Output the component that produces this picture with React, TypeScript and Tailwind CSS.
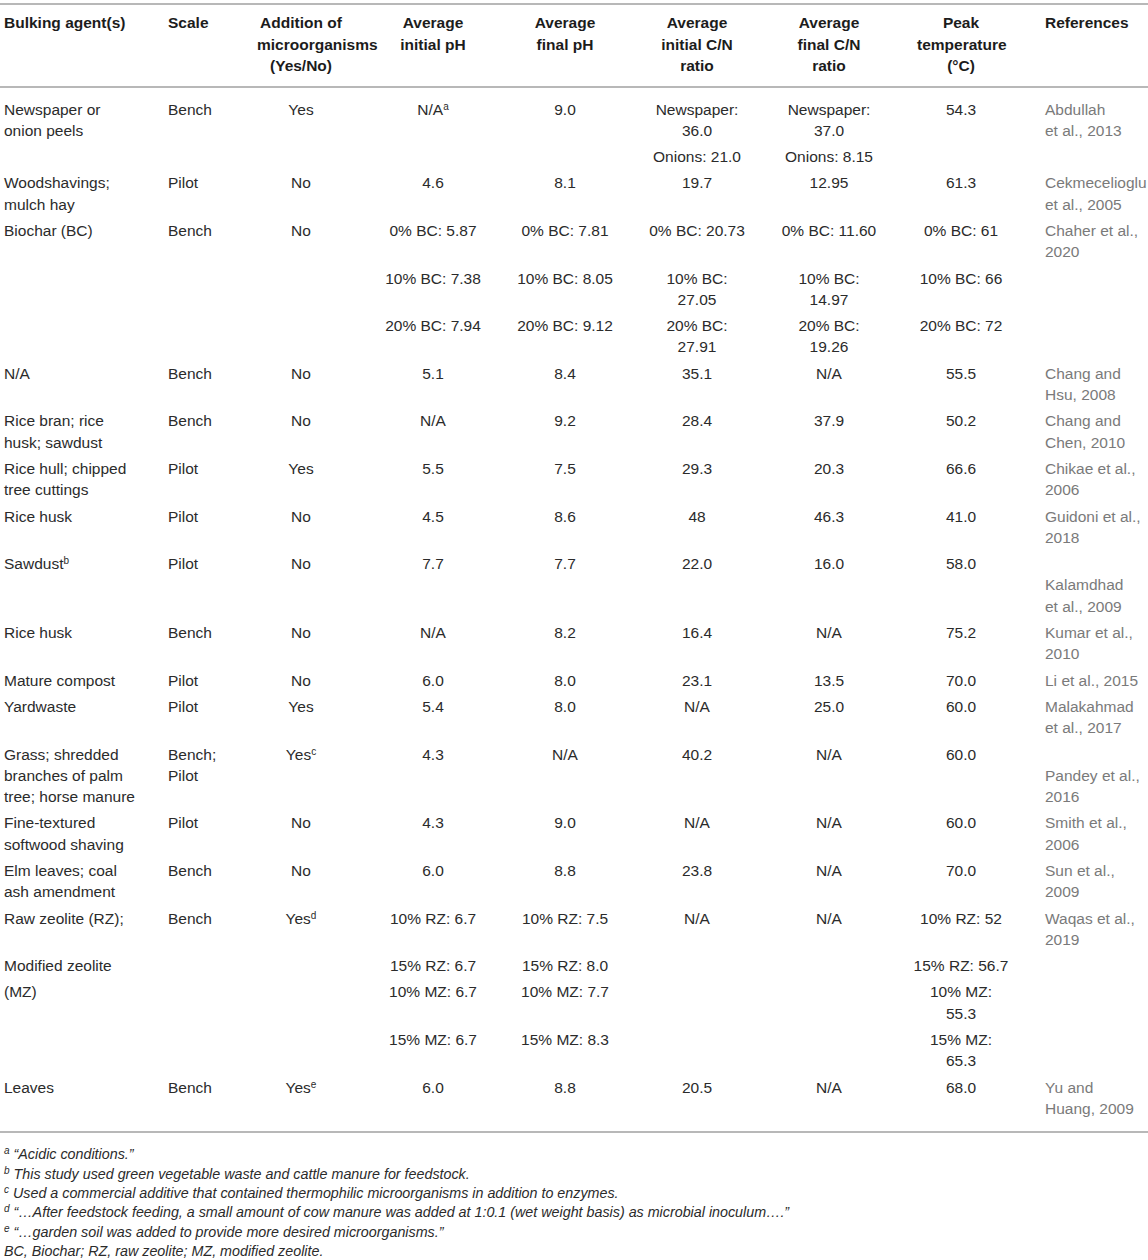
import type { ReactNode } from "react"

const Sup = ({ children }: { children: ReactNode }) => (
  <sup className="text-[10px]">{children}</sup>
)

const etal = "et\u00a0al.,"

type Row = ReactNode[]

const rows: Row[] = [
  ["Newspaper or onion peels", "Bench", "Yes", <>N/A<Sup>a</Sup></>, "9.0", "Newspaper: 36.0", "Newspaper: 37.0", "54.3", <>Abdullah {etal} 2013</>],
  ["", "", "", "", "", "Onions: 21.0", "Onions: 8.15", "", ""],
  ["Woodshavings; mulch hay", "Pilot", "No", "4.6", "8.1", "19.7", "12.95", "61.3", <>Cekmecelioglu {etal} 2005</>],
  ["Biochar (BC)", "Bench", "No", "0% BC: 5.87", "0% BC: 7.81", "0% BC: 20.73", "0% BC: 11.60", "0% BC: 61", <>Chaher {etal} 2020</>],
  ["", "", "", "10% BC: 7.38", "10% BC: 8.05", "10% BC: 27.05", "10% BC: 14.97", "10% BC: 66", ""],
  ["", "", "", "20% BC: 7.94", "20% BC: 9.12", "20% BC: 27.91", "20% BC: 19.26", "20% BC: 72", ""],
  ["N/A", "Bench", "No", "5.1", "8.4", "35.1", "N/A", "55.5", "Chang and Hsu, 2008"],
  ["Rice bran; rice husk; sawdust", "Bench", "No", "N/A", "9.2", "28.4", "37.9", "50.2", "Chang and Chen, 2010"],
  ["Rice hull; chipped tree cuttings", "Pilot", "Yes", "5.5", "7.5", "29.3", "20.3", "66.6", <>Chikae {etal} 2006</>],
  ["Rice husk", "Pilot", "No", "4.5", "8.6", "48", "46.3", "41.0", <>Guidoni {etal} 2018</>],
  [<>Sawdust<Sup>b</Sup></>, "Pilot", "No", "7.7", "7.7", "22.0", "16.0", "58.0", <><br />Kalamdhad {etal} 2009</>],
  ["Rice husk", "Bench", "No", "N/A", "8.2", "16.4", "N/A", "75.2", <>Kumar {etal} 2010</>],
  ["Mature compost", "Pilot", "No", "6.0", "8.0", "23.1", "13.5", "70.0", <>Li {etal} 2015</>],
  ["Yardwaste", "Pilot", "Yes", "5.4", "8.0", "N/A", "25.0", "60.0", <>Malakahmad {etal} 2017</>],
  ["Grass; shredded branches of palm tree; horse manure", "Bench; Pilot", <>Yes<Sup>c</Sup></>, "4.3", "N/A", "40.2", "N/A", "60.0", <><br />Pandey {etal} 2016</>],
  ["Fine-textured softwood shaving", "Pilot", "No", "4.3", "9.0", "N/A", "N/A", "60.0", <>Smith {etal} 2006</>],
  ["Elm leaves; coal ash amendment", "Bench", "No", "6.0", "8.8", "23.8", "N/A", "70.0", <>Sun {etal} 2009</>],
  ["Raw zeolite (RZ);", "Bench", <>Yes<Sup>d</Sup></>, "10% RZ: 6.7", "10% RZ: 7.5", "N/A", "N/A", "10% RZ: 52", <>Waqas {etal} 2019</>],
  ["Modified zeolite", "", "", "15% RZ: 6.7", "15% RZ: 8.0", "", "", "15% RZ: 56.7", ""],
  ["(MZ)", "", "", "10% MZ: 6.7", "10% MZ: 7.7", "", "", <>10% MZ:<br />55.3</>, ""],
  ["", "", "", "15% MZ: 6.7", "15% MZ: 8.3", "", "", <>15% MZ:<br />65.3</>, ""],
  ["Leaves", "Bench", <>Yes<Sup>e</Sup></>, "6.0", "8.8", "20.5", "N/A", "68.0", <>Yu and Huang, 2009</>],
]

const headers = [
  "Bulking agent(s)",
  "Scale",
  "Addition of microorganisms (Yes/No)",
  "Average initial pH",
  "Average final pH",
  "Average initial C/N ratio",
  "Average final C/N ratio",
  "Peak temperature (°C)",
  "References",
]

// padding per column: first two and last left-aligned, the rest centred
function cellPad(i: number, head: boolean) {
  if (i === 0) return "pl-[4px] pr-[24px] text-left"
  if (i === 1) return "pl-[4px] pr-[4px] text-left"
  if (i === 8) return "pl-[18px] pr-[4px] text-left"
  return head ? "px-[22px] text-center" : "px-[16px] text-center"
}

const footnotes: [string, string][] = [
  ["a", "\u201cAcidic conditions.\u201d"],
  ["b", "This study used green vegetable waste and cattle manure for feedstock."],
  ["c", "Used a commercial additive that contained thermophilic microorganisms in addition to enzymes."],
  ["d", "\u201c\u2026After feedstock feeding, a small amount of cow manure was added at 1:0.1 (wet weight basis) as microbial inoculum\u2026.\u201d"],
  ["e", "\u201c\u2026garden soil was added to provide more desired microorganisms.\u201d"],
]

export default function App() {
  return (
    <div className="w-[1148px] h-[1260px] overflow-hidden bg-white font-['Liberation_Sans',Arial,sans-serif] text-[#2b2b2b]">
      <table className="table-fixed w-[1148px] border-collapse mt-[3px] text-[15.5px] leading-[21.3px]">
        <colgroup>
          <col className="w-[164px]" />
          <col className="w-[71px]" />
          <col className="w-[132px]" />
          <col className="w-[132px]" />
          <col className="w-[132px]" />
          <col className="w-[132px]" />
          <col className="w-[132px]" />
          <col className="w-[132px]" />
          <col className="w-[121px]" />
        </colgroup>
        <thead>
          <tr className="border-t-2 border-b-2 border-[#b8b8b8]">
            {headers.map((h, i) => (
              <th
                key={i}
                className={`align-top font-bold text-[#1c1c1c] pt-[7px] pb-[9px] leading-[21.5px] ${cellPad(i, true)}`}
              >
                {h}
              </th>
            ))}
          </tr>
        </thead>
        <tbody>
          {rows.map((r, ri) => {
            const first = ri === 0
            const last = ri === rows.length - 1
            return (
              <tr key={ri} className={last ? "border-b-2 border-[#b8b8b8]" : ""}>
                {r.map((c, i) => (
                  <td
                    key={i}
                    className={`align-top ${first ? "pt-[11px]" : "pt-[2.5px]"} ${last ? "pb-[12px]" : "pb-[2.5px]"} ${cellPad(i, false)} ${i === 8 ? "text-[#7a7a7a]" : ""}`}
                  >
                    {c}
                  </td>
                ))}
              </tr>
            )
          })}
        </tbody>
      </table>

      <div className="mt-[12px] pl-[4px] italic text-[14.3px] leading-[19.4px] text-[#2b2b2b]">
        {footnotes.map(([k, t]) => (
          <div key={k}>
            <sup className="text-[10px] mr-[4px]">{k}</sup>
            {t}
          </div>
        ))}
        <div>BC, Biochar; RZ, raw zeolite; MZ, modified zeolite.</div>
      </div>
    </div>
  )
}
